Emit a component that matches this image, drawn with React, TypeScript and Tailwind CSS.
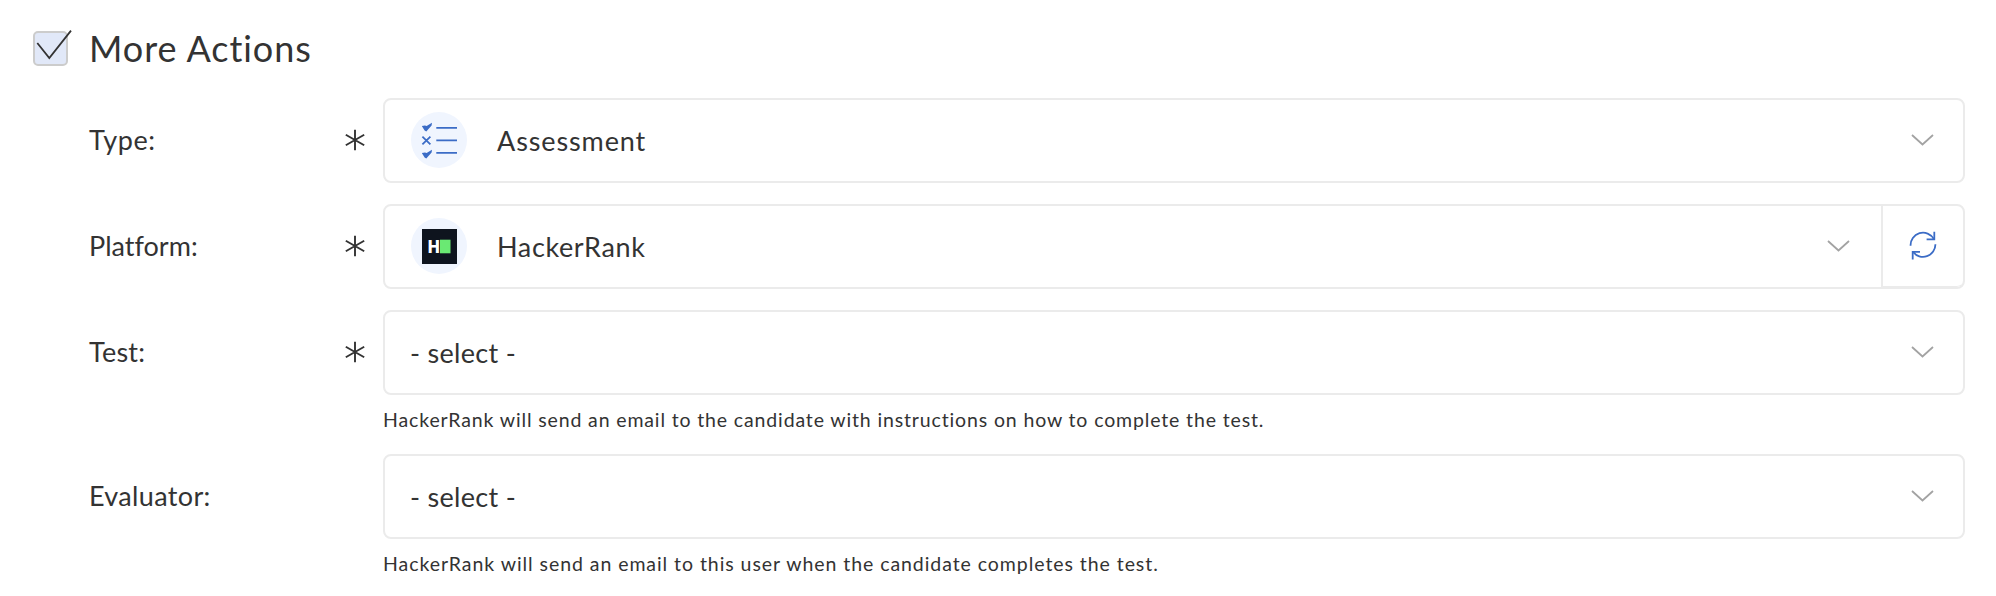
import React, { useState } from 'react';
import clsx from 'clsx';

function Chevron() {
  return (
    <svg width="23" height="12" viewBox="0 0 23 12" fill="none" className="mb-0.5 shrink-0">
      <path d="M1 1 L11.5 10.5 L22 1" stroke="#a3a3a3" strokeWidth="1.8" />
    </svg>
  );
}

function Asterisk() {
  return (
    <svg width="20" height="22" viewBox="0 0 20 22" fill="none" className="mb-0.5 shrink-0">
      <path d="M10 0.8 V21.2 M0.8 5.7 L19.2 16.3 M19.2 5.7 L0.8 16.3" stroke="#333333" strokeWidth="1.9" />
    </svg>
  );
}

function AssessmentIcon() {
  return (
    <svg width="56" height="56" viewBox="0 0 56 56" fill="none">
      <path d="M25.3 15.8 H46 M25.3 28.4 H46 M25.3 40.9 H46" stroke="#3b6cc6" strokeWidth="1.8" />
      <path d="M11.4 24.6 L19.4 32.3 M19.4 24.6 L11.4 32.3" stroke="#3b6cc6" strokeWidth="1.8" />
      <path d="M10.8 14 L14 13.4 L15.6 14 L21 10.8 L20.6 13.4 L15.3 19.6 L13.6 18.6 Z" fill="#3b6cc6" />
      <path d="M10.8 41 L14 40.4 L15.6 41 L21 37.8 L20.6 40.4 L15.3 46.6 L13.6 45.6 Z" fill="#3b6cc6" />
    </svg>
  );
}

function HackerRankLogo() {
  return (
    <svg width="35" height="35" viewBox="0 0 35 35">
      <rect width="35" height="35" fill="#0e141e" />
      <text
        x="5.8"
        y="24.3"
        fontFamily="Roboto, sans-serif"
        fontWeight="900"
        fontSize="19"
        fill="#ffffff"
        textLength="12"
        lengthAdjust="spacingAndGlyphs"
      >
        H
      </text>
      <rect x="18" y="10.7" width="10.5" height="13.6" fill="#6ae973" />
    </svg>
  );
}

function RefreshIcon() {
  return (
    <svg width="30" height="30" viewBox="0 0 30 30" fill="none" stroke="#3b6cc6" strokeWidth="1.8">
      <path d="M2.6 14.8 A12.4 12.4 0 0 1 25.8 8" />
      <path d="M26.3 0.8 V8.3 H18.6" />
      <path d="M27.4 13.2 A12.4 12.4 0 0 1 5 20.8" />
      <path d="M4.7 28.4 V20.8 H12" />
    </svg>
  );
}

interface FieldProps {
  label: string;
  labelClass: string;
  value: string;
  valueClass: string;
  required?: boolean;
  icon?: React.ReactNode;
  refresh?: boolean;
  hint?: string;
  hintClass?: string;
}

function Field({ label, labelClass, value, valueClass, required, icon, refresh, hint, hintClass }: FieldProps) {
  return (
    <div className="flex">
      <div className="flex h-[85px] w-[294px] shrink-0 items-center justify-between pr-[18px]">
        <span className={clsx('pb-0.5 text-[27px] leading-8', labelClass)}>{label}</span>
        {required && <Asterisk />}
      </div>

      <div className="grow">
        <div className="flex h-[85px] overflow-hidden rounded-lg border-2 border-[#ebebeb] bg-white">
          <button
            type="button"
            className={clsx('flex grow items-center text-left', icon ? 'pl-[26px]' : 'pl-[25px]', refresh ? 'pr-[31px]' : 'pr-[29px]')}
          >
            {icon && (
              <span className="mb-px mr-[30px] flex h-14 w-14 items-center justify-center rounded-full bg-[#f0f5fe]">
                {icon}
              </span>
            )}
            <span className={clsx('grow text-[27px] leading-8', valueClass)}>{value}</span>
            <Chevron />
          </button>
          {refresh && (
            <button
              type="button"
              className="flex w-[82px] shrink-0 items-center justify-center rounded-br-md border-b border-l-2 border-[#ebebeb]"
            >
              <RefreshIcon />
            </button>
          )}
        </div>
        {hint && <p className={clsx('mt-[13px] h-[23px] text-[19.5px] leading-6 whitespace-nowrap', hintClass)}>{hint}</p>}
      </div>
    </div>
  );
}

export default function App() {
  const [checked, setChecked] = useState(true);

  return (
    <div className="h-[596px] w-[1996px] overflow-hidden bg-white pl-[33px] pr-[31px] font-['Lato',sans-serif] text-[#333333]">
      <div className="flex h-[98px] items-center pb-px">
        <button
          type="button"
          onClick={() => setChecked(!checked)}
          className="h-[35px] w-[35px] rounded-[5px] border-2 border-[#cccccc] bg-[#e1e8f8]"
        >
          {checked && (
            <svg width="40" height="31" viewBox="0 0 40 31" fill="none" className="-mt-1 overflow-visible">
              <path d="M2.3 12 L14.3 27 L36 -0.4" stroke="#333333" strokeWidth="1.8" />
            </svg>
          )}
        </button>
        <h1 className="ml-[21px] pb-px text-[36px] leading-[44px] tracking-[0.95px]">More Actions</h1>
      </div>

      <div className="pl-14">
        <div className="flex flex-col gap-[21px]">
          <Field
            label="Type:"
            labelClass="tracking-[0.6px]"
            value="Assessment"
            valueClass="tracking-[0.88px]"
            required
            icon={<AssessmentIcon />}
          />
          <Field
            label="Platform:"
            labelClass="tracking-[0.02px]"
            value="HackerRank"
            valueClass="tracking-[0.63px]"
            required
            icon={<HackerRankLogo />}
            refresh
          />
          <Field
            label="Test:"
            labelClass="tracking-[0.25px]"
            value="- select -"
            valueClass="tracking-[0.3px]"
            required
            hint="HackerRank will send an email to the candidate with instructions on how to complete the test."
            hintClass="tracking-[0.86px]"
          />
        </div>
        <div className="mt-[23px]">
          <Field
            label="Evaluator:"
            labelClass="tracking-[0.35px]"
            value="- select -"
            valueClass="tracking-[0.3px]"
            hint="HackerRank will send an email to this user when the candidate completes the test."
            hintClass="tracking-[0.94px]"
          />
        </div>
      </div>
    </div>
  );
}
